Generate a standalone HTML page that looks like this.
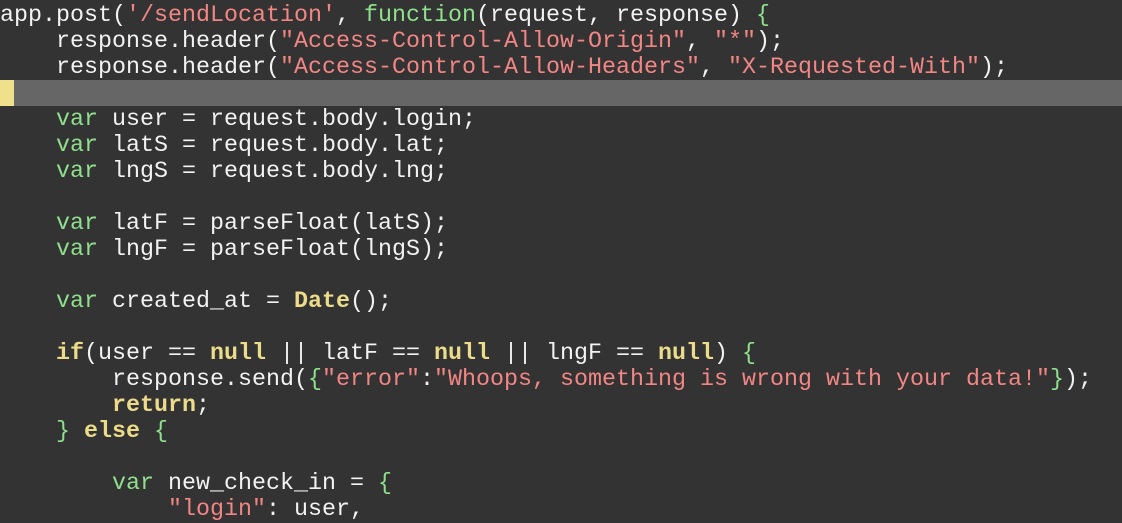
<!DOCTYPE html>
<html><head><style>
html,body{margin:0;padding:0;background:#333333;width:1122px;height:508px;overflow:hidden}
pre{margin:0;position:absolute;top:3px;left:0;font-family:"Liberation Mono",monospace;font-size:23.33px;line-height:26px;color:#f2f2f2}
.hl{position:absolute;left:0;top:80px;width:1122px;height:26px;background:#666666}
.mk{position:absolute;left:0;top:80px;width:14px;height:26px;background:#efe08c}
.s{color:#f28684}.k{color:#8fe08c}.y{color:#ecdc8a;font-weight:bold}
</style></head><body>
<div class="hl"></div><div class="mk"></div>
<pre>app.post(<span class="s">'/sendLocation'</span>, <span class="k">function</span>(request, response) <span class="k">{</span>
    response.header(<span class="s">"Access-Control-Allow-Origin"</span>, <span class="s">"*"</span>);
    response.header(<span class="s">"Access-Control-Allow-Headers"</span>, <span class="s">"X-Requested-With"</span>);

    <span class="k">var</span> user = request.body.login;
    <span class="k">var</span> latS = request.body.lat;
    <span class="k">var</span> lngS = request.body.lng;

    <span class="k">var</span> latF = parseFloat(latS);
    <span class="k">var</span> lngF = parseFloat(lngS);

    <span class="k">var</span> created_at = <span class="y">Date</span>();

    <span class="y">if</span>(user == <span class="y">null</span> || latF == <span class="y">null</span> || lngF == <span class="y">null</span>) <span class="k">{</span>
        response.send(<span class="k">{</span><span class="s">"error"</span>:<span class="s">"Whoops, something is wrong with your data!"</span><span class="k">}</span>);
        <span class="y">return</span>;
    <span class="k">}</span> <span class="y">else</span> <span class="k">{</span>

        <span class="k">var</span> new_check_in = <span class="k">{</span>
            <span class="s">"login"</span>: user,
</pre>
</body></html>
